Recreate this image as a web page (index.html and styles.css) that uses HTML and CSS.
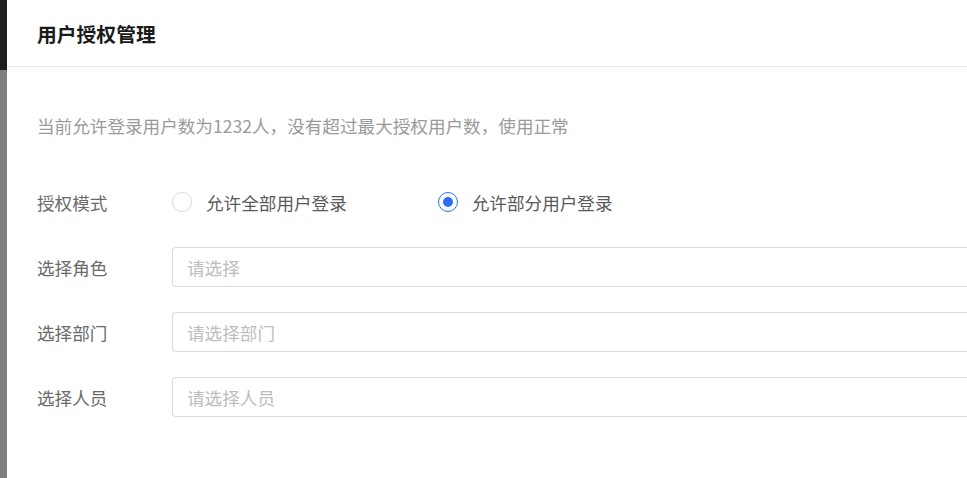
FILE: index.html
```html
<!DOCTYPE html>
<html>
<head>
  <meta charset="UTF-8">
  <meta name="viewport" content="width=device-width, initial-scale=1.0">
  <title>用户授权管理</title>
  <link rel="stylesheet" href="styles.css">
</head>
<body>

  <div class="backdrop">
    <div class="backdrop-top"></div>
    <div class="backdrop-rest"></div>
  </div>

  <div class="modal">
    <div class="modal-header">
      <h1 class="modal-title">用户授权管理</h1>
    </div>

    <div class="modal-body">
      <p class="notice">当前允许登录用户数为1232人，没有超过最大授权用户数，使用正常</p>

      <div class="form-row">
        <span class="form-label">授权模式</span>
        <div class="radio-group">
          <label class="radio">
            <span class="radio-dot"></span>
            <span class="radio-text">允许全部用户登录</span>
          </label>
          <label class="radio checked">
            <span class="radio-dot"></span>
            <span class="radio-text">允许部分用户登录</span>
          </label>
        </div>
      </div>

      <div class="form-row">
        <span class="form-label">选择角色</span>
        <input class="form-input" type="text" placeholder="请选择">
      </div>

      <div class="form-row">
        <span class="form-label">选择部门</span>
        <input class="form-input" type="text" placeholder="请选择部门">
      </div>

      <div class="form-row">
        <span class="form-label">选择人员</span>
        <input class="form-input" type="text" placeholder="请选择人员">
      </div>
    </div>
  </div>

</body>
</html>
```

FILE: styles.css
```css
  body {
    margin: 0;
    height: 478px;
    display: flex;
    overflow: hidden;
    font-family: "Noto Sans CJK SC", "Noto Sans", sans-serif;
    background-color: #ffffff;
  }

  /* strip of the page behind the dialog */
  .backdrop {
    width: 7px;
    flex-shrink: 0;
    display: flex;
    flex-direction: column;
  }

  .backdrop-top {
    height: 70px;
    background-color: #1f1f1f;
  }

  .backdrop-rest {
    flex: 1;
    background-color: #7f7f7f;
  }

  .modal {
    flex: 1;
    min-width: 0;
    background-color: #ffffff;
  }

  .modal-header {
    height: 66px;
    display: flex;
    align-items: center;
    padding: 0 30px;
    border-bottom: 1px solid #e8e8e8;
  }

  .modal-title {
    margin: 0;
    font-size: 19.8px;
    font-weight: bold;
    color: #1a1a1a;
  }

  .modal-body {
    padding: 47px 0 0 30px;
  }

  .notice {
    margin: 0 0 44px;
    font-size: 17.6px;
    line-height: 24px;
    color: #9a9a9a;
  }

  .form-row {
    display: flex;
    align-items: center;
    height: 40px;
    margin-bottom: 25px;
  }

  .form-label {
    width: 135px;
    flex-shrink: 0;
    font-size: 17.6px;
    color: #6b6b6b;
  }

  .radio-group {
    display: flex;
    gap: 91px;
  }

  .radio {
    display: flex;
    align-items: center;
    gap: 14px;
    cursor: pointer;
  }

  .radio-dot {
    width: 18px;
    height: 18px;
    border: 1px solid #dcdcdc;
    border-radius: 50%;
    position: relative;
  }

  .radio.checked .radio-dot {
    border-color: #2a6ef5;
  }

  .radio.checked .radio-dot::after {
    content: "";
    position: absolute;
    top: 4px;
    left: 4px;
    width: 10px;
    height: 10px;
    border-radius: 50%;
    background-color: #2a6ef5;
  }

  .radio-text {
    font-size: 17.6px;
    color: #5a5a5a;
  }

  /* the fields run on past the right edge of the window */
  .form-input {
    flex: 1;
    min-width: 0;
    height: 40px;
    box-sizing: border-box;
    padding: 0 14px;
    font-family: inherit;
    font-size: 17.6px;
    color: #333333;
    border: 1px solid #dcdcdc;
    border-right: none;
    border-radius: 4px 0 0 4px;
    outline: none;
  }

  .form-input::placeholder {
    color: #bdbdbd;
  }
```
